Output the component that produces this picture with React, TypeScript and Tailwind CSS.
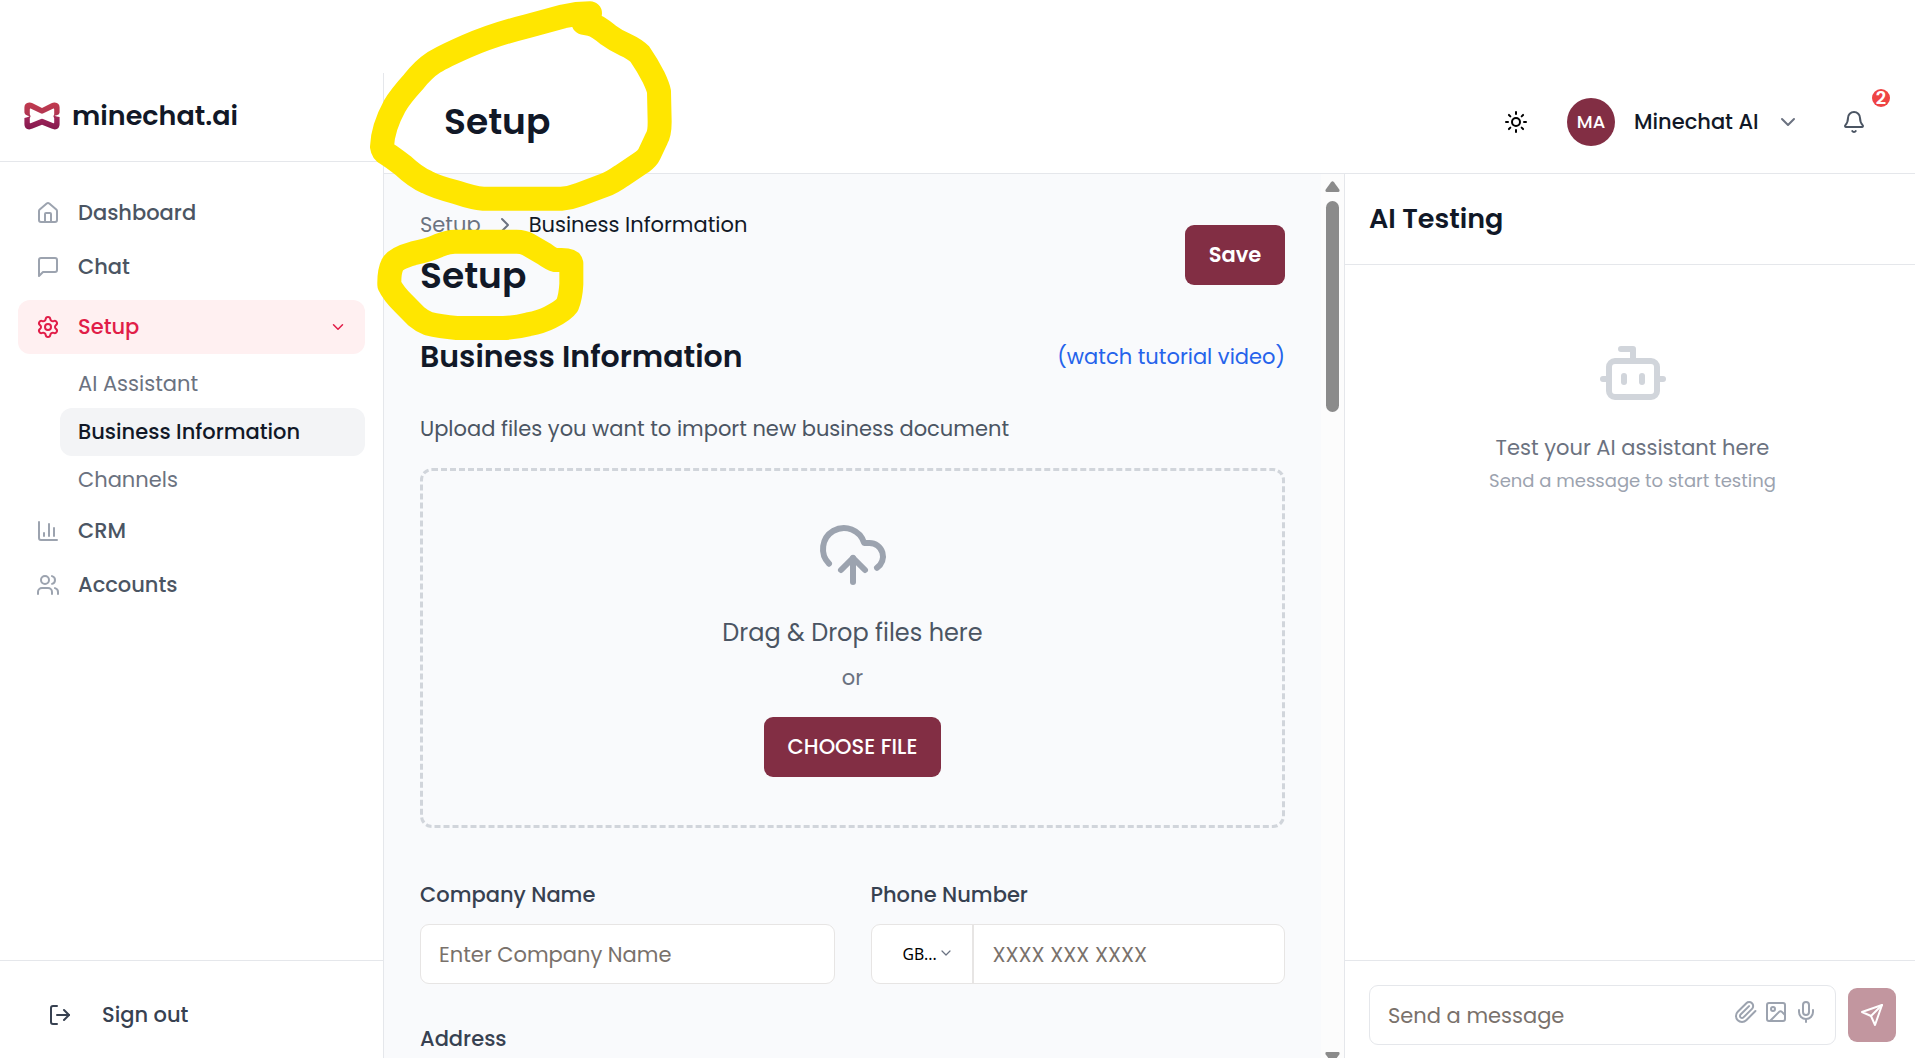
import type { ReactNode } from "react";
import {
  Bell,
  Bot,
  ChartColumn,
  ChevronDown,
  ChevronRight,
  CloudUpload,
  House,
  Image,
  LogOut,
  Mic,
  Settings,
  Sun,
  Users,
} from "lucide-react";

function StrokeIcon({ children, className }: { children: ReactNode; className?: string }) {
  return (
    <svg
      viewBox="0 0 24 24"
      fill="none"
      stroke="currentColor"
      strokeWidth="2"
      strokeLinecap="round"
      strokeLinejoin="round"
      className={className}
    >
      {children}
    </svg>
  );
}

function Logo() {
  return (
    <svg viewBox="0 0 36 28" className="h-7 w-9 shrink-0" fill="none">
      <defs>
        <linearGradient id="logo" x1="0" y1="0" x2="0" y2="28" gradientUnits="userSpaceOnUse">
          <stop offset="0" stopColor="#c23b4e" />
          <stop offset="0.45" stopColor="#b03552" />
          <stop offset="0.6" stopColor="#9c2459" />
          <stop offset="1" stopColor="#82174c" />
        </linearGradient>
      </defs>
      <path
        fill="url(#logo)"
        fillRule="evenodd"
        d="M5.2 .5 Q7 .4 8.6 1.2 L18 6 L27.4 1.2 Q29 .4 30.8 .5 Q35.6 .9 35.6 5.6 V10.5 Q35.6 12.6 32.8 13.2 L30.4 13.7 L32.8 14.4 L35.6 15 V22.2 Q35.6 27 30.8 27.4 Q29 27.4 27.4 26.6 L18 22.8 L8.6 26.6 Q7 27.4 5.2 27.4 Q.4 27 .4 22.2 V16 L3.2 15.2 L5.6 14.3 L3.2 13.4 Q.4 12.6 .4 10.5 V5.6 Q.4 .9 5.2 .5 Z M6.6 6.6 Q5.8 6.4 5.8 7.4 V12.2 L6.6 14.2 L5.8 16.2 V20.4 Q5.8 21.4 6.6 21.2 L17 17 Q18 16.6 19 17 L29.4 21.2 Q30.2 21.4 30.2 20.4 V16.2 L29.4 14.2 L30.2 12.2 V7.4 Q30.2 6.4 29.4 6.6 L19.4 11.3 Q18 12 16.6 11.3 Z"
      />
    </svg>
  );
}

function NavItem({ icon, label }: { icon: ReactNode; label: string }) {
  return (
    <a className="flex h-[54px] items-center gap-[18px] px-[18px] text-[21px] font-medium text-[#4b5563]">
      <span className="text-[#9ca3af]">{icon}</span>
      <span>{label}</span>
    </a>
  );
}

function Sidebar() {
  return (
    <aside className="flex w-96 shrink-0 flex-col border-r border-[#e5e7eb] bg-white">
      <div className="flex h-[89px] shrink-0 items-center gap-3 border-b border-[#e5e7eb] pb-0.5 pl-6">
        <Logo />
        <span className="pb-0.5 text-[27px] leading-none font-semibold text-[#111827]">
          minechat.ai
        </span>
      </div>
      <nav className="flex flex-1 flex-col px-[18px] pt-6">
        <NavItem icon={<House className="size-6" />} label="Dashboard" />
        <NavItem
          icon={
            <StrokeIcon className="size-6">
              <path d="M21 15a2 2 0 0 1-2 2H7l-4 4V5a2 2 0 0 1 2-2h14a2 2 0 0 1 2 2z" />
            </StrokeIcon>
          }
          label="Chat"
        />
        <a className="mt-1.5 flex h-[54px] items-center gap-[18px] rounded-xl bg-[#fff0f1] px-[18px] text-[21px] font-medium text-[#e11d48]">
          <Settings className="size-6" />
          <span className="flex-1">Setup</span>
          <ChevronDown className="size-[18px]" />
        </a>
        <div className="mt-1.5 flex flex-col pl-[42px] text-[21px] text-[#6b7280]">
          <a className="flex h-12 items-center px-[18px]">AI Assistant</a>
          <a className="flex h-12 items-center rounded-xl bg-[#f3f4f6] px-[18px] font-medium text-[#111827]">
            Business Information
          </a>
          <a className="flex h-12 items-center px-[18px]">Channels</a>
        </div>
        <NavItem icon={<ChartColumn className="size-6" />} label="CRM" />
        <NavItem icon={<Users className="size-6" />} label="Accounts" />
      </nav>
      <div className="flex h-[98px] shrink-0 items-center gap-[30px] border-t border-[#e5e7eb] pt-[23px] pb-[13px] pl-12 text-[21px] font-medium text-[#374151]">
        <LogOut className="size-6" />
        <span>Sign out</span>
      </div>
    </aside>
  );
}

function Header() {
  return (
    <header className="flex h-[101px] shrink-0 items-center border-b border-[#e5e7eb] bg-white pb-0.5 pl-[60px]">
      <h1 className="flex-1 text-4xl font-semibold text-[#111827]">Setup</h1>
      <Sun className="size-6 text-black" />
      <span className="ml-[39px] flex size-12 items-center justify-center rounded-full bg-[#822e44] text-lg font-medium text-white">
        MA
      </span>
      <span className="ml-[19px] w-[123px] text-[21px] font-medium whitespace-nowrap text-[#111827]">
        Minechat AI
      </span>
      <ChevronDown className="ml-[19px] size-6 text-[#6b7280]" />
      <div className="relative mr-[49px] ml-[42px]">
        <Bell className="size-6 text-[#4b5563]" />
        <span className="absolute -top-[21px] left-[30px] flex size-[18px] items-center justify-center rounded-full bg-[#ef4444] text-lg leading-none font-semibold text-white">
          2
        </span>
      </div>
    </header>
  );
}

function SetupForm() {
  return (
    <main className="flex-1 overflow-hidden px-9 pt-[33px]">
      <div className="flex items-center justify-between">
        <div>
          <div className="flex h-9 items-center gap-3 text-[21px]">
            <span className="text-[#6b7280]">Setup</span>
            <ChevronRight className="size-6 text-[#6b7280]" />
            <span className="text-[#111827]">Business Information</span>
          </div>
          <h1 className="mt-1.5 flex h-[54px] items-center text-4xl font-semibold text-[#111827]">
            Setup
          </h1>
        </div>
        <button className="h-[60px] w-[100px] rounded-[9px] bg-[#822e44] text-[21px] font-semibold text-white">
          Save
        </button>
      </div>

      <div className="mt-[31px] flex h-[45px] items-center justify-between">
        <h2 className="text-3xl font-semibold text-[#111827]">Business Information</h2>
        <a className="text-[21px] text-[#2563eb]">(watch tutorial video)</a>
      </div>

      <p className="mt-8 h-9 text-[21px] leading-9 text-[#4b5563]">
        Upload files you want to import new business document
      </p>

      <div className="mt-[21px] flex h-[360px] flex-col items-center rounded-xl border-3 border-dashed border-[#d1d5db] pt-12">
        <CloudUpload className="size-[72px] text-[#9ca3af]" />
        <p className="mt-6 h-9 text-2xl leading-9 text-[#4b5563]">Drag &amp; Drop files here</p>
        <p className="mt-3 h-[30px] text-[21px] leading-[30px] text-[#6b7280]">or</p>
        <button className="mt-6 h-[60px] w-[177px] rounded-[9px] bg-[#822e44] text-[21px] font-medium text-white">
          CHOOSE FILE
        </button>
      </div>

      <div className="mt-12 grid grid-cols-2 gap-9 text-[21px]">
        <div>
          <label className="block h-12 pt-px leading-9 font-medium text-[#374151]">
            Company Name
          </label>
          <div className="flex h-[60px] items-center rounded-[9px] border border-stone-200 bg-white px-[18px] pt-0.5 text-stone-500">
            Enter Company Name
          </div>
        </div>
        <div>
          <label className="block h-12 pt-px leading-9 font-medium text-[#374151]">
            Phone Number
          </label>
          <div className="flex h-[60px] rounded-[9px] border border-stone-200 bg-white">
            <div className="flex w-[102px] items-center border-r-2 border-stone-200 pl-[31px] font-['Noto_Sans'] text-[15.75px] text-black">
              <span className="w-[35px] pt-0.5">GB...</span>
              <ChevronDown className="mb-0.5 size-4 text-gray-500" strokeWidth={1.8} />
            </div>
            <span className="flex items-center pt-0.5 pl-[19px] text-stone-500">XXXX XXX XXXX</span>
          </div>
        </div>
        <label className="block h-9 pt-px leading-9 font-medium text-[#374151]">Address</label>
      </div>
    </main>
  );
}

function Scrollbar() {
  return (
    <div className="flex w-[23px] shrink-0 flex-col items-center overflow-hidden bg-[#fcfcfc] pt-[7px]">
      <svg viewBox="0 0 15 11" className="h-[11px] w-[15px] shrink-0" fill="#8b8b8b">
        <path d="M6 1.2 Q7.5-.8 9 1.2 L14.3 8.6 Q15.2 10.8 13.4 11 H1.6 Q-.2 10.8 .7 8.6 Z" />
      </svg>
      <div className="mt-[9px] h-[211px] w-[13px] shrink-0 rounded-full bg-[#8b8b8b]" />
      <svg viewBox="0 0 15 11" className="mt-[640px] h-[11px] w-[15px] shrink-0" fill="#8b8b8b">
        <path d="M6 9.8 Q7.5 11.8 9 9.8 L14.3 2.4 Q15.2 .2 13.4 0 H1.6 Q-.2 .2 .7 2.4 Z" />
      </svg>
    </div>
  );
}

function TestingPanel() {
  return (
    <section className="flex w-[571px] shrink-0 flex-col border-l border-[#e5e7eb] bg-white">
      <div className="flex h-[91px] shrink-0 items-center border-b border-[#e5e7eb] pl-6">
        <h2 className="text-[27px] font-semibold text-[#111827]">AI Testing</h2>
      </div>
      <div className="flex flex-1 flex-col items-center pt-[72px] pl-[5px]">
        <Bot className="size-[72px] text-[#d1d5db]" />
        <p className="mt-[21px] h-9 text-[21px] leading-9 text-[#6b7280]">
          Test your AI assistant here
        </p>
        <p className="mt-px h-[27px] text-lg leading-[27px] text-[#9ca3af]">
          Send a message to start testing
        </p>
      </div>
      <div className="flex h-[98px] shrink-0 items-center gap-3 border-t border-[#e5e7eb] pt-6 pr-[19px] pb-[13px] pl-6">
        <div className="flex h-[60px] flex-1 items-center gap-1.5 rounded-[9px] border border-[#e5e7eb] pr-[17px] pl-[18px] text-[#9ca3af]">
          <span className="flex-1 pt-0.5 text-[21px] text-stone-500">Send a message</span>
          <StrokeIcon className="mb-1.5 size-6">
            <path d="m21.44 11.05-9.19 9.19a6 6 0 0 1-8.49-8.49l8.57-8.57A4 4 0 1 1 18 8.84l-8.59 8.57a2 2 0 0 1-2.83-2.83l8.49-8.48" />
          </StrokeIcon>
          <Image className="mb-1.5 size-6" />
          <Mic className="mb-1.5 size-6" />
        </div>
        <button className="flex h-[54px] w-12 items-center justify-center rounded-[9px] bg-[#c2969f] text-white">
          <StrokeIcon className="size-6">
            <path d="m22 2-7 20-4-9-9-4Z" />
            <path d="M22 2 11 13" />
          </StrokeIcon>
        </button>
      </div>
    </section>
  );
}

/* Freehand highlighter loops around the two page titles. */
function Highlights() {
  return (
    <svg
      viewBox="0 0 1020 1080"
      className="pointer-events-none absolute top-0 left-[360px] h-[360px] w-[340px]"
      fill="none"
      stroke="#ffe600"
      strokeWidth="72"
      strokeLinecap="round"
      strokeLinejoin="round"
    >
      <path d="M690 40 Q650 40 610 49 L500 79 Q400 104 320 139 Q250 170 222 187 Q190 208 160 246 Q120 290 104 318 Q68 384 66 440 Q68 455 80 461 Q95 470 130 497 Q165 530 200 546 Q230 562 290 577 Q340 594 370 596 H604 Q632 594 660 583 L735 555 Q755 548 785 527 L845 487 Q862 475 868 462 L890 415 Q899 400 899 365 L897 275 Q895 262 880 230 Q862 195 840 163 Q825 148 795 134 Q765 120 745 105 Q710 76 690 72 L670 68" />
      <path d="M585 780 Q575 778 550 760 L505 734 Q490 725 470 725 H285 Q265 725 235 737 Q205 750 160 760 Q105 775 97 795 Q87 815 88 855 Q100 880 130 910 L170 950 Q185 963 205 971 Q240 980 290 984 H430 Q465 983 505 973 Q545 965 570 952 Q610 932 622 915 Q632 890 634 852 V790 Q632 780 605 780 Z" />
    </svg>
  );
}

export default function App() {
  return (
    <div className="relative flex h-[1058px] w-[1915px] flex-col overflow-hidden bg-white pt-[73px] font-['Poppins','Inter',sans-serif] leading-normal">
      <div className="flex min-h-0 flex-1">
        <Sidebar />
        <div className="flex min-w-0 flex-1 flex-col">
          <Header />
          <div className="flex min-h-0 flex-1 bg-[#f9fafc]">
            <SetupForm />
            <Scrollbar />
            <TestingPanel />
          </div>
        </div>
      </div>
      <Highlights />
    </div>
  );
}
